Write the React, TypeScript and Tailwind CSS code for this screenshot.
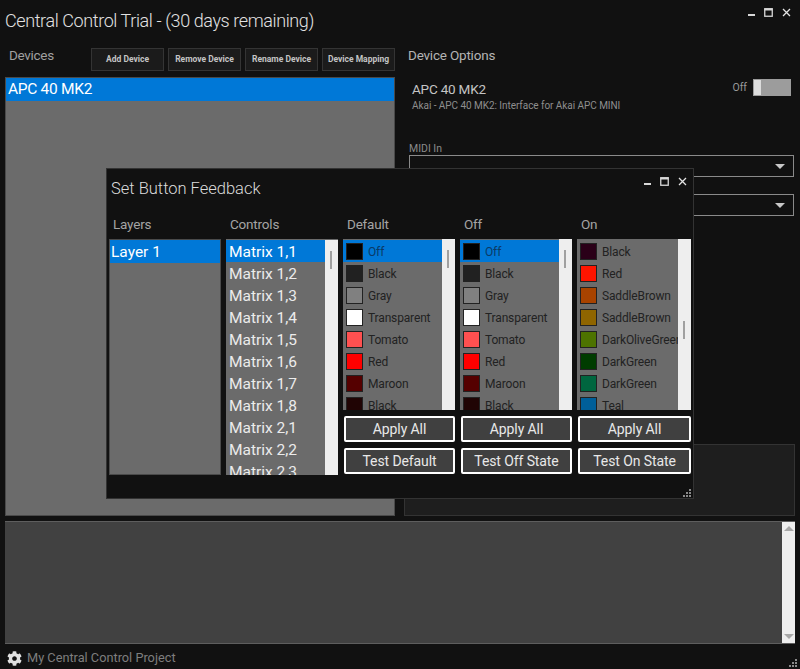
import { FaCog } from "react-icons/fa";

const font = { fontFamily: 'Roboto, "Noto Sans", sans-serif' };

const defaultColors = [
  ["Off", "#000000"],
  ["Black", "#212121"],
  ["Gray", "#808080"],
  ["Transparent", "#ffffff"],
  ["Tomato", "#ff5050"],
  ["Red", "#ff0000"],
  ["Maroon", "#550000"],
  ["Black", "#200404"],
];

const onColors = [
  ["Black", "#2a0018"],
  ["Red", "#ff1500"],
  ["SaddleBrown", "#a84300"],
  ["SaddleBrown", "#8f6500"],
  ["DarkOliveGreen", "#4d7300"],
  ["DarkGreen", "#003c00"],
  ["DarkGreen", "#00663f"],
  ["Teal", "#005f99"],
];

const controls = ["1,1", "1,2", "1,3", "1,4", "1,5", "1,6", "1,7", "1,8", "2,1", "2,2", "2,3"];

function WindowButtons() {
  return (
    <div className="flex items-center gap-[9px]">
      <svg width="7" height="9" viewBox="0 0 7 9"><rect x="0" y="6" width="7" height="2" fill="#d8d8d8" /></svg>
      <svg width="9" height="9" viewBox="0 0 9 9"><rect x="0.75" y="0.75" width="7.5" height="7.5" fill="none" stroke="#d8d8d8" strokeWidth="1.3" /><rect x="0.5" y="0.5" width="8" height="2" fill="#d8d8d8" /></svg>
      <svg width="9" height="9" viewBox="0 0 9 9"><path d="M1 1l7 7M8 1l-7 7" stroke="#e4e4e4" strokeWidth="1.3" fill="none" /></svg>
    </div>
  );
}

function Grip() {
  return (
    <svg width="9" height="9" viewBox="0 0 9 9" fill="#8a8a8a">
      <rect x="7" y="1" width="2" height="2" />
      <rect x="4" y="4" width="2" height="2" />
      <rect x="7" y="4" width="2" height="2" />
      <rect x="1" y="7" width="2" height="2" />
      <rect x="4" y="7" width="2" height="2" />
      <rect x="7" y="7" width="2" height="2" />
    </svg>
  );
}

function DarkButton({ label }: { label: string }) {
  return (
    <div className="w-[73px] h-[23px] flex items-center justify-center bg-[#1b1b1b] border border-[#343434] text-[8.5px] font-bold text-[#c4c4c4] whitespace-nowrap">
      {label}
    </div>
  );
}

function Select() {
  return (
    <div className="h-[22px] border border-[#8a8a8a] flex items-center justify-end pr-[8px]">
      <div className="w-0 h-0 border-l-[5px] border-r-[5px] border-t-[5px] border-l-transparent border-r-transparent border-t-[#c8c8c8]" />
    </div>
  );
}

function OutlineButton({ label }: { label: string }) {
  return (
    <div className="h-[26px] flex items-center justify-center rounded-[2px] bg-[#404040] border-2 border-white text-[14px] tracking-[-0.1px] text-[#e8e8e8] whitespace-nowrap">
      {label}
    </div>
  );
}

function ColorList({ items, selected, thumbTop }: { items: string[][]; selected: boolean; thumbTop: number }) {
  return (
    <div className="relative h-[171px] overflow-hidden flex bg-[#6b6b6b]">
      <div className="flex-1 min-w-0 overflow-hidden pt-px">
        {items.map(([name, color], i) => (
          <div
            key={i}
            className={`h-[22px] flex items-center gap-[5px] pl-[3px] pt-px whitespace-nowrap text-[12px] tracking-[-0.15px] ${selected && i === 0 ? "bg-[#0078d7] text-[#0b3a66]" : "text-[#222222]"}`}
          >
            <div className="w-[17px] h-[17px] shrink-0 border border-[#222222]" style={{ backgroundColor: color }} />
            <span>{name}</span>
          </div>
        ))}
      </div>
      <div className="relative w-[13px] shrink-0 bg-[#eeeeee]">
        <div className="absolute left-[5px] w-[2px] h-[18px] bg-[#a0a0a0]" style={{ top: thumbTop }} />
      </div>
    </div>
  );
}

function Column({ title, children }: { title: string; children: React.ReactNode }) {
  return (
    <div className="flex flex-col min-w-0">
      <div className="h-[33px] pl-[4px] pt-[8px] text-[13.5px] tracking-[-0.2px] text-[#a4a4a4]">{title}</div>
      {children}
    </div>
  );
}

function FeedbackColumn({ title, items, selected, thumbTop, test }: { title: string; items: string[][]; selected: boolean; thumbTop: number; test: string }) {
  return (
    <Column title={title}>
      <ColorList items={items} selected={selected} thumbTop={thumbTop} />
      <div className="flex flex-col gap-[6px] mt-[6px] pl-px">
        <OutlineButton label="Apply All" />
        <OutlineButton label={test} />
      </div>
    </Column>
  );
}

export default function App() {
  return (
    <div className="relative w-[800px] h-[669px] overflow-hidden bg-[#111111] flex flex-col" style={font}>
      {/* Title bar */}
      <div className="h-[46px] shrink-0 flex justify-between pl-[5px] pr-[9px]">
        <div className="pt-[7px] text-[18px] tracking-[-0.4px] font-light text-[#e2e2e2] whitespace-nowrap">
          Central Control Trial - (30 days remaining)
        </div>
        <div className="pt-[8px]"><WindowButtons /></div>
      </div>

      {/* Main panels */}
      <div className="h-[470px] shrink-0 flex pl-[5px] pr-[5px] gap-[9px]">
        <div className="w-[390px] flex flex-col">
          <div className="h-[31px] flex justify-between items-start pt-[2px]">
            <div className="pl-[4px] text-[13.5px] leading-[14px] tracking-[-0.3px] text-[#a0a0a0]">Devices</div>
            <div className="flex gap-[4px]">
              <DarkButton label="Add Device" />
              <DarkButton label="Remove Device" />
              <DarkButton label="Rename Device" />
              <DarkButton label="Device Mapping" />
            </div>
          </div>
          <div className="flex-1 bg-[#6b6b6b] border border-[#4a4a4a]">
            <div className="h-[23px] flex items-center px-[2px] pt-px bg-[#0078d7] text-[15.5px] tracking-[-0.3px] text-white">APC 40 MK2</div>
          </div>
        </div>

        <div className="flex-1 flex flex-col">
          <div className="pl-[4px] text-[13.5px] leading-[18px] tracking-[-0.2px] text-[#b4b4b4]">Device Options</div>
          <div className="flex justify-between pl-[8px] pr-[4px] mt-[8px]">
            <div>
              <div className="text-[13.5px] tracking-[-0.2px] text-[#c4c4c4] leading-[20px] mt-[7px]">APC 40 MK2</div>
              <div className="text-[10px] tracking-[-0.05px] text-[#8e8e8e] leading-[14px]">Akai - APC 40 MK2: Interface for Akai APC MINI</div>
            </div>
            <div className="flex items-start gap-[6px] pt-[7px]">
              <span className="text-[10.5px] text-[#9a9a9a] leading-[17px]">Off</span>
              <div className="w-[38px] h-[17px] border border-[#9c9c9c] bg-[#9c9c9c] flex">
                <div className="w-[7px] bg-[#dcdcdc]" />
              </div>
            </div>
          </div>
          <div className="pl-[5px] pr-[1px] mt-[30px] flex flex-col">
            <div className="text-[10.5px] text-[#8a8a8a] leading-[12px]">MIDI In</div>
            <Select />
            <div className="h-[17px]" />
            <Select />
          </div>
          <div className="flex-1" />
          <div className="h-[72px] bg-[#1e1e1e] border border-[#333333]" />
        </div>
      </div>

      {/* Log */}
      <div className="h-[123px] shrink-0 mt-[5px] mx-[5px] flex bg-[#414141] border-y border-[#5e5e5e]">
        <div className="flex-1" />
        <div className="w-[13px] bg-[#eeeeee] flex flex-col items-center justify-between py-[4px]">
          <div className="w-0 h-0 border-l-[5px] border-r-[5px] border-b-[5px] border-l-transparent border-r-transparent border-b-[#a8a8a8]" />
          <div className="w-0 h-0 border-l-[5px] border-r-[5px] border-t-[5px] border-l-transparent border-r-transparent border-t-[#a8a8a8]" />
        </div>
      </div>

      {/* Status bar */}
      <div className="flex-1 flex items-center justify-between pl-[7px] pr-[3px] pt-[3px]">
        <div className="flex items-center gap-[5px]">
          <FaCog className="w-[15px] h-[15px] text-[#e0e0e0]" />
          <span className="text-[12.75px] text-[#7e7e7e]">My Central Control Project</span>
        </div>
        <div className="self-end pb-[2px]"><Grip /></div>
      </div>

      {/* Set Button Feedback dialog */}
      <div className="absolute left-[106px] top-[168px] w-[588px] h-[331px] bg-[#111111] border border-[#333333] flex flex-col">
        <div className="h-[37px] shrink-0 flex justify-between pl-[4px] pr-[6px]">
          <div className="pt-[8px] text-[16.5px] font-light text-[#dcdcdc]">Set Button Feedback</div>
          <div className="pt-[8px]"><WindowButtons /></div>
        </div>
        <div className="grid grid-cols-[112px_112px_112px_112px_114px] gap-x-[5px] pl-[2px]">
          <Column title="Layers">
            <div className="h-[236px] bg-[#6b6b6b] border border-[#4a4a4a]">
              <div className="h-[23px] flex items-center pl-[1px] pt-[2px] bg-[#0078d7] text-[15.5px] text-white">Layer 1</div>
            </div>
          </Column>
          <Column title="Controls">
            <div className="h-[236px] flex overflow-hidden bg-[#6b6b6b] pt-px">
              <div className="flex-1 min-w-0">
                {controls.map((c, i) => (
                  <div key={c} className={`h-[22px] flex items-center pl-[3px] pt-[3px] text-[15.5px] text-[#ececec] whitespace-nowrap ${i === 0 ? "bg-[#0078d7] text-white" : ""}`}>
                    Matrix {c}
                  </div>
                ))}
              </div>
              <div className="relative w-[13px] shrink-0 bg-[#eeeeee]">
                <div className="absolute left-[5px] top-[11px] w-[2px] h-[18px] bg-[#a0a0a0]" />
              </div>
            </div>
          </Column>
          <FeedbackColumn title="Default" items={defaultColors} selected thumbTop={11} test="Test Default" />
          <FeedbackColumn title="Off" items={defaultColors} selected thumbTop={11} test="Test Off State" />
          <FeedbackColumn title="On" items={onColors} selected={false} thumbTop={82} test="Test On State" />
        </div>
        <div className="absolute right-[2px] bottom-[1px]"><Grip /></div>
      </div>
    </div>
  );
}
